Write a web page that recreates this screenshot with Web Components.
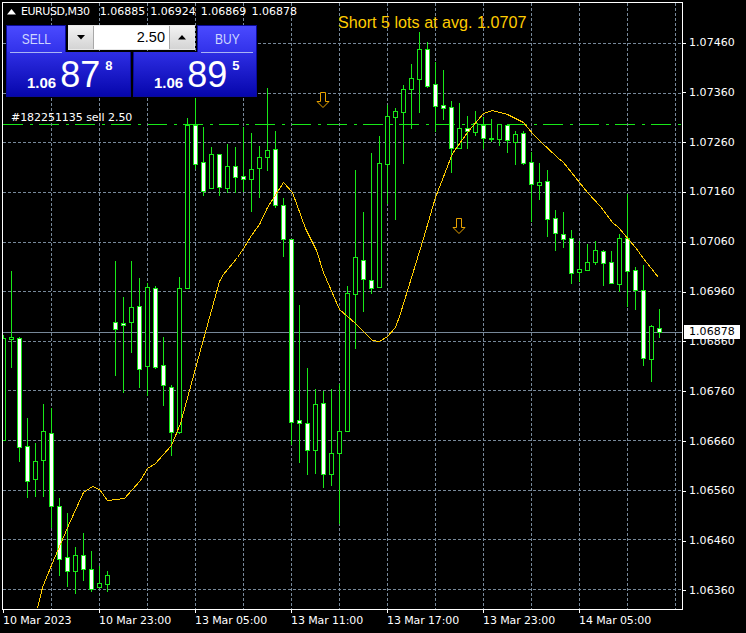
<!DOCTYPE html>
<html><head><meta charset="utf-8"><title>EURUSD,M30</title>
<style>
html,body{margin:0;padding:0;background:#000;width:746px;height:633px;overflow:hidden}
body{font-family:"DejaVu Sans",sans-serif;color:#fff}
</style></head><body>
<mt-terminal>
  <mt-plot slot="plot">
    <mt-header symbol="EURUSD,M30" ohlc="1.06885 1.06924 1.06869 1.06878"></mt-header>
    <mt-comment>Short 5 lots at avg. 1.0707</mt-comment>
    <mt-order>#182251135 sell 2.50</mt-order>
    <mt-panel>
      <mt-side slot="sell" label="SELL"></mt-side>
      <mt-spin slot="spin" value="2.50"></mt-spin>
      <mt-side slot="buy" label="BUY"></mt-side>
      <mt-quote slot="bid" lead="1.06" big="87" sup="8"></mt-quote>
      <mt-quote slot="ask" lead="1.06" big="89" sup="5"></mt-quote>
    </mt-panel>
    <mt-arrow style="left:313px;top:89px"></mt-arrow>
    <mt-arrow style="left:449px;top:215px"></mt-arrow>
  </mt-plot>
  <mt-price-axis slot="prices" current="1.06878" current-top="323"
    labels="1.07460 1.07360 1.07260 1.07160 1.07060 1.06960 1.06860 1.06760 1.06660 1.06560 1.06460 1.06360"></mt-price-axis>
  <mt-time-axis slot="times" labels="10 Mar 2023|10 Mar 23:00|13 Mar 05:00|13 Mar 11:00|13 Mar 17:00|13 Mar 23:00|14 Mar 05:00"></mt-time-axis>
</mt-terminal>
<script>
const def=(n,c)=>customElements.define(n,c);
class Base extends HTMLElement{
  render(html){ if(!this.shadowRoot) this.attachShadow({mode:'open'}); this.shadowRoot.innerHTML=html; }
}
def('mt-terminal',class extends Base{connectedCallback(){this.render(`<style>
:host{display:grid;grid-template-columns:681px 63px;grid-template-rows:608px 23px;column-gap:0;padding:2px 0 0 2px;width:746px;height:633px;box-sizing:border-box}
.t{grid-column:1 / span 2}
</style><slot name="plot"></slot><slot name="prices"></slot><div class="t"><slot name="times"></slot></div>`)}});

const G='#18e818';
const CANDLES=[
[335,338,440,440,0],[271,337,339,367,0],[337,338,447,461,1],[418,446,481,497,1],[443,461,479,496,0],[404,431,460,496,0],
[408,433,506,527,1],[498,506,559,575,1],[513,557,571,586,1],[547,555,571,593,0],[533,555,569,580,1],[551,569,589,591,1],
[566,583,587,587,0],[571,575,584,591,0],[261,322,329,375,1],[297,323,325,392,1],[261,307,322,352,0],[278,306,369,387,1],
[283,287,366,395,0],[286,288,367,368,1],[337,365,385,405,1],[385,387,432,455,1],[277,288,432,433,0],[118,125,288,288,0],
[98,125,164,168,1],[127,162,191,195,1],[147,154,188,188,0],[154,154,187,195,1],[144,166,188,192,0],[147,166,177,192,1],
[127,176,179,191,1],[133,169,179,211,0],[146,157,168,197,0],[88,150,157,170,0],[131,149,205,207,1],[198,205,239,256,1],
[239,239,422,444,1],[305,420,423,462,1],[368,423,450,474,1],[389,404,450,473,0],[391,403,474,487,1],[389,453,474,485,0],
[384,431,453,523,0],[286,293,431,431,0],[170,257,294,348,0],[212,260,279,311,1],[153,280,288,293,1],[136,163,287,287,0],
[105,116,164,203,0],[108,111,117,219,0],[85,89,112,163,0],[64,78,89,128,0],[32,49,79,112,0],[42,49,86,87,1],
[62,84,106,131,1],[70,105,108,119,1],[101,107,148,172,1],[103,128,148,148,0],[116,128,131,148,1],[111,123,132,135,0],
[117,125,138,148,1],[119,138,139,141,0],[124,124,139,145,0],[124,125,140,152,1],[131,134,142,164,0],[131,133,163,164,1],
[152,162,184,221,1],[163,182,185,199,0],[170,181,219,236,1],[210,218,233,250,1],[212,234,239,247,1],[230,238,273,283,1],
[241,269,272,281,0],[244,262,270,270,0],[241,250,262,264,0],[250,251,263,285,1],[251,262,283,283,1],[234,238,284,291,0],
[194,238,271,306,1],[267,270,290,309,1],[265,290,358,365,1],[325,326,359,381,0],[309,328,332,337,1]];
const MA=[[37,608],[42,587],[53,560],[68,525],[83,492],[92,486],[99,489],[107,500],[124,498],[140,480],[147,468],[155,463],[171,445],[180,423],[195,368],[206,328],[219,281],[223,274],[237,257],[243,248],[251,235],[259,224],[267,207],[283,182],[292,192],[305,228],[316,250],[323,272],[339,309],[355,323],[372,340],[379,341],[387,336],[395,327],[400,313],[423,238],[435,197],[452,153],[467,132],[483,113],[492,110],[507,114],[523,122],[532,133],[540,141],[557,157],[563,162],[587,192],[600,206],[612,222],[618,227],[635,247],[643,258],[658,277]];
const HY=[43,93,142,192,242,291,341,390,440,490,539,589];

function chartSVG(){
  let s='';
  s+=`<line x1="3" x2="682" y1="124.5" y2="124.5" stroke="${G}" stroke-dasharray="20 7 3 6"/>`;
  for(const y of HY) s+=`<line x1="3" x2="682" y1="${y+.5}" y2="${y+.5}" stroke="#778899" stroke-dasharray="3 2"/>`;
  for(let x=51;x<=675;x+=48) s+=`<line x1="${x+.5}" x2="${x+.5}" y1="3" y2="609" stroke="#778899" stroke-dasharray="3 2"/>`;
  s+=`<line x1="3" x2="682" y1="332.5" y2="332.5" stroke="#778899"/>`;
  CANDLES.forEach((c,k)=>{
    const x=3+8*k,[wt,bt,bb,wb,white]=c;
    s+=`<rect x="${x}" y="${wt}" width="1" height="${wb-wt+1}" fill="${G}"/>`;
    s+=`<rect x="${x-2}" y="${bt}" width="5" height="${bb-bt+1}" fill="${G}"/>`;
    if(bb-bt>=2) s+=`<rect x="${x-1}" y="${bt+1}" width="3" height="${bb-bt-1}" fill="${white?'#fff':'#000'}"/>`;
  });
  s+=`<polyline fill="none" stroke="#ffcc00" points="${MA.map(p=>(p[0]+.5)+','+(p[1]+.5)).join(' ')}"/>`;
  return `<svg width="679" height="606" viewBox="3 3 679 606" shape-rendering="crispEdges">${s}</svg>`;
}
def('mt-plot',class extends Base{connectedCallback(){this.render(`<style>
:host{display:block;position:relative;box-sizing:border-box;width:681px;height:608px;border:1px solid #fff;background:#000;overflow:hidden}
svg{display:block}
</style>${chartSVG()}<slot></slot>`)}});

def('mt-header',class extends Base{connectedCallback(){this.render(`<style>
:host{position:absolute;left:4px;top:2px;display:flex;align-items:center;gap:10px;font:11px/14px "DejaVu Sans",sans-serif;color:#fff;white-space:nowrap}
.s{display:flex;align-items:center;gap:5px}
.s span{letter-spacing:-.45px}
svg{display:block}
.o{word-spacing:1.6px}
</style><div class="s"><svg width="9" height="6" viewBox="0 0 9 6"><polygon points="4.5,0 9,5.5 0,5.5" fill="#fff"/></svg><span>${this.getAttribute('symbol')}</span></div><span class="o">${this.getAttribute('ohlc')}</span>`)}});

def('mt-comment',class extends Base{connectedCallback(){this.render(`<style>
:host{position:absolute;left:335px;top:9px;font:16.15px/20px "Liberation Sans",sans-serif;color:#ffcc00;white-space:nowrap}
</style><slot></slot>`)}});

def('mt-order',class extends Base{connectedCallback(){this.render(`<style>
:host{position:absolute;left:8px;top:108px;font:11px/14px "DejaVu Sans",sans-serif;color:#fff;white-space:nowrap;letter-spacing:-.05px}
</style><slot></slot>`)}});

def('mt-panel',class extends Base{connectedCallback(){this.render(`<style>
:host{position:absolute;left:3px;top:22px;display:grid;width:251px;height:72px;grid-template-rows:27px 45px}
.r1{display:grid;grid-template-columns:60px 127px 60px;column-gap:2px}
.r2{display:grid;grid-template-columns:125px 124px;column-gap:2px}
</style><div class="r1"><slot name="sell"></slot><slot name="spin"></slot><slot name="buy"></slot></div>
<div class="r2"><slot name="bid"></slot><slot name="ask"></slot></div>`)}});

def('mt-side',class extends Base{connectedCallback(){this.render(`<style>
:host{display:block;box-sizing:border-box;position:relative;height:27px;background:linear-gradient(#4a4aff,#3232ea);border:1px solid #0a0a9a;border-bottom:0;text-align:center;color:#cdd6ff;font:15px/25px "Liberation Sans",sans-serif}
i{display:block;height:1px;background:#a9b4f4;margin:0 3px}
div{height:26px}
span{display:inline-block;transform:scaleX(.8)}
</style><div><span>${this.getAttribute('label')}</span></div><i></i>`)}});

def('mt-spin',class extends Base{connectedCallback(){
 const tri=(d)=>`<svg width="9" height="5" viewBox="0 0 9 5"><polygon points="${d?'0,0 8,0 4,4.5':'4,0 8,4.5 0,4.5'}" fill="#000"/></svg>`;
 this.render(`<style>
:host{display:grid;grid-template-columns:25px 1fr 25px;height:25px;box-sizing:border-box;border:1px solid #e8e8e8;background:#fff;font:14.5px/23px "Liberation Sans",sans-serif;color:#000}
.b{display:flex;align-items:center;justify-content:center;background:linear-gradient(#f2f2f2,#d4d4d4);border-right:1px solid #a8a8a8}
.b.u{border-right:0;border-left:1px solid #a8a8a8}
.v{text-align:right;padding-right:4px}
</style><div class="b">${tri(1)}</div><div class="v">${this.getAttribute('value')}</div><div class="b u">${tri(0)}</div>`)}});

def('mt-quote',class extends Base{connectedCallback(){this.render(`<style>
:host{display:flex;box-sizing:border-box;height:45px;padding-left:20px;background:linear-gradient(#2e2ee4,#0606ac);border:1px solid #0a0a9a;border-top:0;color:#fff;font-family:"Liberation Sans",sans-serif;align-items:flex-start}
.l{font:bold 15px/18px "Liberation Sans",sans-serif;margin-top:22px;margin-right:4px}
.b{font:36px/40px "Liberation Sans",sans-serif;margin-top:3px;margin-right:5px}
.s{font:bold 13px/15px "Liberation Sans",sans-serif;margin-top:6px}
</style><span class="l">${this.getAttribute('lead')}</span><span class="b">${this.getAttribute('big')}</span><span class="s">${this.getAttribute('sup')}</span>`)}});

def('mt-arrow',class extends Base{connectedCallback(){this.render(`<style>
:host{position:absolute;display:block;width:14px;height:16px}
svg{display:block}
</style><svg width="14" height="16" viewBox="0 0 14 16"><polygon points="4.5,0.5 9.5,0.5 9.5,9.5 13,9.5 7,15.5 1,9.5 4.5,9.5" fill="#000" stroke="#e8a200" stroke-width="1"/></svg>`)}});

def('mt-price-axis',class extends Base{connectedCallback(){
 const items=this.getAttribute('labels').split(' ').map(t=>`<div class="i"><i></i><span>${t}</span></div>`).join('');
 this.render(`<style>
:host{display:flex;flex-direction:column;justify-content:space-between;position:relative;box-sizing:border-box;height:596px;padding-top:34px;font:11px/14px "DejaVu Sans",sans-serif;color:#fff;letter-spacing:.05px}
.i{display:flex;align-items:center;height:14px;gap:3px}
i{display:block;width:3px;height:1px;background:#fff}
.c{position:absolute;left:1px;top:${this.getAttribute('current-top')}px;width:56px;height:14px;background:#fff;color:#000;box-sizing:border-box;padding-left:5px}
</style>${items}<div class="c">${this.getAttribute('current')}</div>`)}});

def('mt-time-axis',class extends Base{connectedCallback(){
 const items=this.getAttribute('labels').split('|').map(t=>`<div class="i"><i></i><span>${t}</span></div>`).join('');
 this.render(`<style>
:host{display:flex;box-sizing:border-box;padding-left:1px;font:11px/14px "DejaVu Sans",sans-serif;color:#fff;letter-spacing:-.12px}
.i{width:96px;white-space:nowrap}
i{display:block;width:1px;height:3px;background:#fff;margin-bottom:1px}
</style>${items}`)}});
</script>
</body></html>
